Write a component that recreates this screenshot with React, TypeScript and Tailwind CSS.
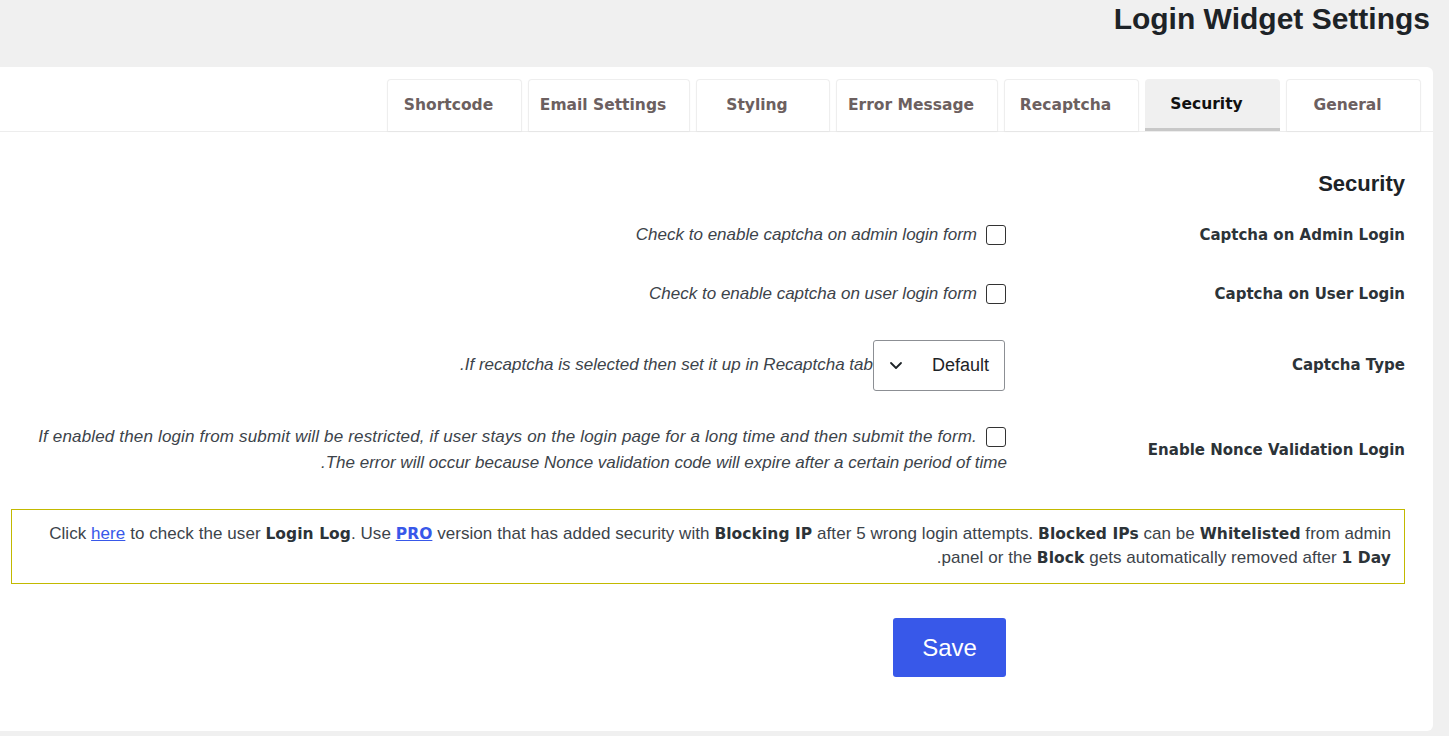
import React from 'react';

const TABS = [
  { label: 'General', w: 'w-[135px]', active: false },
  { label: 'Security', w: 'w-[135px]', active: true },
  { label: 'Recaptcha', w: 'w-[135px]', active: false },
  { label: 'Error Message', w: 'w-[162px]', active: false },
  { label: 'Styling', w: 'w-[134px]', active: false },
  { label: 'Email Settings', w: 'w-[162px]', active: false },
  { label: 'Shortcode', w: 'w-[135px]', active: false },
];

const BOLD = "font-['DejaVu_Sans',sans-serif] font-bold";
const DESC = "font-['Liberation_Sans',Arial,sans-serif] italic text-[17px] text-[#3c434a]";

const Checkbox = ({ className = '' }: { className?: string }) => (
  <span className={`inline-block w-[20px] h-[20px] shrink-0 rounded-[3px] border border-[#333] bg-white ${className}`} />
);

const Label = ({ children }: { children: React.ReactNode }) => (
  <div className={`w-[398px] shrink-0 text-[15px] text-[#2c3338] ${BOLD}`}>{children}</div>
);

const B = ({ children }: { children: React.ReactNode }) => (
  <b className={`text-[15.5px] text-[#2c3338] ${BOLD}`}>{children}</b>
);

export default function App() {
  return (
    <div dir="rtl" className="w-[1449px] h-[736px] overflow-hidden bg-[#f0f0f0] font-['Liberation_Sans',Arial,sans-serif]">
      {/* page title */}
      <div className="h-[67px] pr-[19px] pt-[1px]">
        <h1 className="text-[30px] leading-[36px] font-bold text-[#1d2327]">Login Widget Settings</h1>
      </div>

      <div className="mr-[16px] h-[664px] bg-white rounded-r-[6px]">
        {/* tab strip */}
        <div className="flex gap-[6px] pr-[12px] pt-[12px] border-b border-[#ededed]">
          {TABS.map((t) => (
            <div
              key={t.label}
              className={`${t.w} h-[52px] flex items-center justify-center pr-[12px] rounded-t-[4px] text-[15.5px] ${BOLD} ${
                t.active
                  ? 'bg-[#f0f0f0] text-[#111] pt-[3px] border-b-[3px] border-[#c8c8c8]'
                  : 'bg-white text-[#6c6060] border border-b-0 border-[#eeeeee] shadow-[0_1px_2px_rgba(0,0,0,0.04)]'
              }`}
            >
              {t.label}
            </div>
          ))}
        </div>

        <div className="pl-[11px] pr-[28px]">
          <h2 className="pt-[40px] text-[22px] leading-[24px] font-bold text-[#1d2327]">Security</h2>

          {/* admin captcha */}
          <div className="flex items-center h-[78px]">
            <Label>Captcha on Admin Login</Label>
            <div className="flex items-center gap-[9px] pr-[1px]">
              <Checkbox />
              <span className={DESC}>Check to enable captcha on admin login form</span>
            </div>
          </div>

          {/* user captcha */}
          <div className="flex items-center h-[40px]">
            <Label>Captcha on User Login</Label>
            <div className="flex items-center gap-[9px] pr-[1px]">
              <Checkbox />
              <span className={DESC}>Check to enable captcha on user login form</span>
            </div>
          </div>

          {/* captcha type */}
          <div className="flex items-center h-[102px]">
            <Label>Captcha Type</Label>
            <div className="flex items-center pr-[2px]">
              <div className="w-[132px] h-[51px] flex items-center justify-between pr-[15px] pl-[15px] border border-[#8c8f94] rounded-[3px] bg-white">
                <span className="text-[18px] text-[#1d2327]">Default</span>
                <svg width="14" height="10" viewBox="0 0 14 10" fill="none" stroke="#1d2327" strokeWidth="1.8" strokeLinecap="round" strokeLinejoin="round">
                  <polyline points="2,3 7,8 12,3" />
                </svg>
              </div>
              <span className={DESC}>If recaptcha is selected then set it up in Recaptcha tab.</span>
            </div>
          </div>

          {/* nonce validation */}
          <div className="flex items-center h-[68px]">
            <Label>Enable Nonce Validation Login</Label>
            <div className={`${DESC} leading-[26px]`}>
              <Checkbox className="align-middle ml-[9px] -mt-[2px] mr-[1px]" />
              <span dir="ltr" className="tracking-[0.16px]">If enabled then login from submit will be restricted, if user stays on the login page for a long time and then submit the form.</span>
              <br />
              The error will occur because Nonce validation code will expire after a certain period of time.
            </div>
          </div>

          {/* login log notice */}
          <div className="mt-[25px] h-[75px] border border-[#c2b900] pr-[13px] pl-[12px] pt-[12px] text-[17px] leading-[24px] tracking-[0.06px] text-[#3c434a] whitespace-nowrap">
            Click <a href="#" className="underline text-[#3858e9]">here</a> to check the user <B>Login Log</B>. Use{' '}
            <a href="#" className={`underline text-[15.5px] text-[#3858e9] ${BOLD}`}>PRO</a> version that has added security with{' '}
            <B>Blocking IP</B> after 5 wrong login attempts. <B>Blocked IPs</B> can be <B>Whitelisted</B> from admin
            <br />
            panel or the <B>Block</B> gets automatically removed after <B>1 Day</B>.
          </div>

          <div className="pr-[399px] mt-[34px]">
            <button className="w-[113px] h-[59px] rounded-[3px] bg-[#3858e9] text-white text-[24px]">Save</button>
          </div>
        </div>
      </div>
    </div>
  );
}
